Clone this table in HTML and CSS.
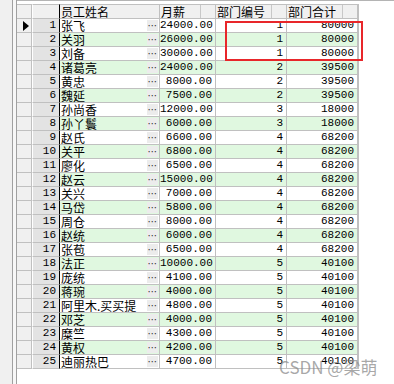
FILE: index.html
```html
<!DOCTYPE html>
<html>
<head>
<meta charset="utf-8">
<link rel="stylesheet" href="styles.css">
</head>
<body>
<div class="frame">
  <div class="gutter"></div>
  <div class="gap"></div>
  <div class="area">
    <div class="topline"></div>
    <div class="grid" id="grid">
      <div class="row head">
        <div class="c ind"></div>
        <div class="c num"></div>
        <div class="c name hcell"><span>员工姓名</span></div>
        <div class="c ell"></div>
        <div class="c sal hcell split"><span>月薪</span></div>
        <div class="c dept hcell split"><span>部门编号</span></div>
        <div class="c tot hcell split"><span>部门合计</span></div>
      </div>
    </div>
  </div>
</div>
<div class="mark">CSDN @梁萌</div>
<script>
var data = [
["张飞","24000.00",1,80000],["关羽","26000.00",1,80000],["刘备","30000.00",1,80000],
["诸葛亮","24000.00",2,39500],["黄忠","8000.00",2,39500],["魏延","7500.00",2,39500],
["孙尚香","12000.00",3,18000],["孙丫鬟","6000.00",3,18000],
["赵氏","6600.00",4,68200],["关平","6800.00",4,68200],["廖化","6500.00",4,68200],
["赵云","15000.00",4,68200],["关兴","7000.00",4,68200],["马岱","5800.00",4,68200],
["周仓","8000.00",4,68200],["赵统","6000.00",4,68200],["张苞","6500.00",4,68200],
["法正","10000.00",5,40100],["庞统","4100.00",5,40100],["蒋琬","4000.00",5,40100],
["阿里木.买买提","4800.00",5,40100],["邓芝","4000.00",5,40100],["糜竺","4300.00",5,40100],
["黄权","4200.00",5,40100],["迪丽热巴","4700.00",5,40100]];
var g = document.getElementById('grid');
data.forEach(function(d,i){
  var r = document.createElement('div');
  r.className = 'row ' + (i % 2 ? 'even' : 'odd');
  r.innerHTML =
    '<div class="c ind">' + (i===0 ? '<span class="arrow"></span>' : '') + '</div>' +
    '<div class="c num mono">' + (i+1) + '</div>' +
    '<div class="c name cjk">' + d[0] + '</div>' +
    '<div class="c ell"><span class="btn">⋯</span></div>' +
    '<div class="c sal mono r">' + d[1] + '</div>' +
    '<div class="c dept mono r">' + d[2] + '</div>' +
    '<div class="c tot mono r">' + d[3] + '</div>';
  g.appendChild(r);
});
</script>
<div class="redbox"></div>
</body>
</html>
```

FILE: styles.css
```css
html, body {
  margin: 0;
  padding: 0;
  background: #ffffff;
  width: 394px;
  height: 384px;
  overflow: hidden;
}
body {
  font-family: "Noto Sans CJK SC", sans-serif;
  font-size: 12px;
  color: #000;
  position: relative;
}
.frame {
  display: flex;
  height: 384px;
}
.gutter {
  width: 12px;
  background: #f0f0f0;
  border-right: 1px solid #a0a0a0;
}
.gap {
  width: 3px;
  background: #f7f7f7;
}
.area {
  flex: 1;
  border-left: 1px solid #a0a0a0;
  background: #fff;
}
.topline {
  height: 4px;
  border-top: 1px solid #b4b4b4;
  box-sizing: border-box;
  background: #fff;
}
.grid {
  width: 341px;
  border-right: 1px solid #c0c0c0;
}
.row {
  display: grid;
  grid-template-columns: 15px 28px 87px 13px 56px 71px 71px;
  height: 14px;
}
.c {
  box-sizing: border-box;
  border-right: 1px solid #c0c0c0;
  border-bottom: 1px solid #c0c0c0;
  height: 14px;
  line-height: 14px;
  white-space: nowrap;
}
.head .c {
  background: #f0f0f0;
  border-top: 1px solid #c0c0c0;
  height: 15px;
  line-height: 14px;
}
.head { height: 15px; }
.head .hcell {
  padding-left: 1px;
}
.split {
  position: relative;
}
.split::after {
  content: "";
  position: absolute;
  right: 14px;
  top: 0;
  bottom: 0;
  border-left: 1px solid #c8c8c8;
}
.ind {
  background: #f0f0f0;
  position: relative;
}
.num {
  background: #e3e3e3;
  border-left: 1px solid #fff;
  border-right: 1px solid #000;
  text-align: right;
  padding-right: 3px;
}
.head .num {
  border-right: 1px solid #000;
}
.name {
  padding-left: 1px;
  border-right: none;
  font-size: 12px;
}
.ell {
  padding: 1px 1px 1px 0;
}
.btn {
  display: block;
  background: #ececec;
  height: 11px;
  line-height: 11px;
  font-size: 10px;
  text-align: center;
  color: #333;
  font-family: "DejaVu Sans", sans-serif;
  overflow: hidden;
}
.odd .name, .odd .sal, .odd .dept, .odd .tot, .odd .ell { background: #ffffff; }
.even .name, .even .sal, .even .dept, .even .tot, .even .ell { background: #e0f8e0; }
.mono {
  font-family: "Liberation Mono", "DejaVu Sans Mono", monospace;
  font-size: 11px;
  line-height: 13px;
}
.r {
  text-align: right;
  padding-right: 3px;
}
.arrow {
  position: absolute;
  left: 6px;
  top: 2px;
  width: 0;
  height: 0;
  border-top: 5px solid transparent;
  border-bottom: 5px solid transparent;
  border-left: 6px solid #000;
}
.redbox {
  position: absolute;
  left: 225px;
  top: 21px;
  width: 134px;
  height: 36px;
  border: 2px solid #e8262a;
}
.mark {
  position: absolute;
  left: 279px;
  top: 356px;
  font-family: "Noto Sans CJK SC", sans-serif;
  font-size: 17px;
  line-height: 22px;
  color: rgba(140, 140, 140, 0.75);
}
```
